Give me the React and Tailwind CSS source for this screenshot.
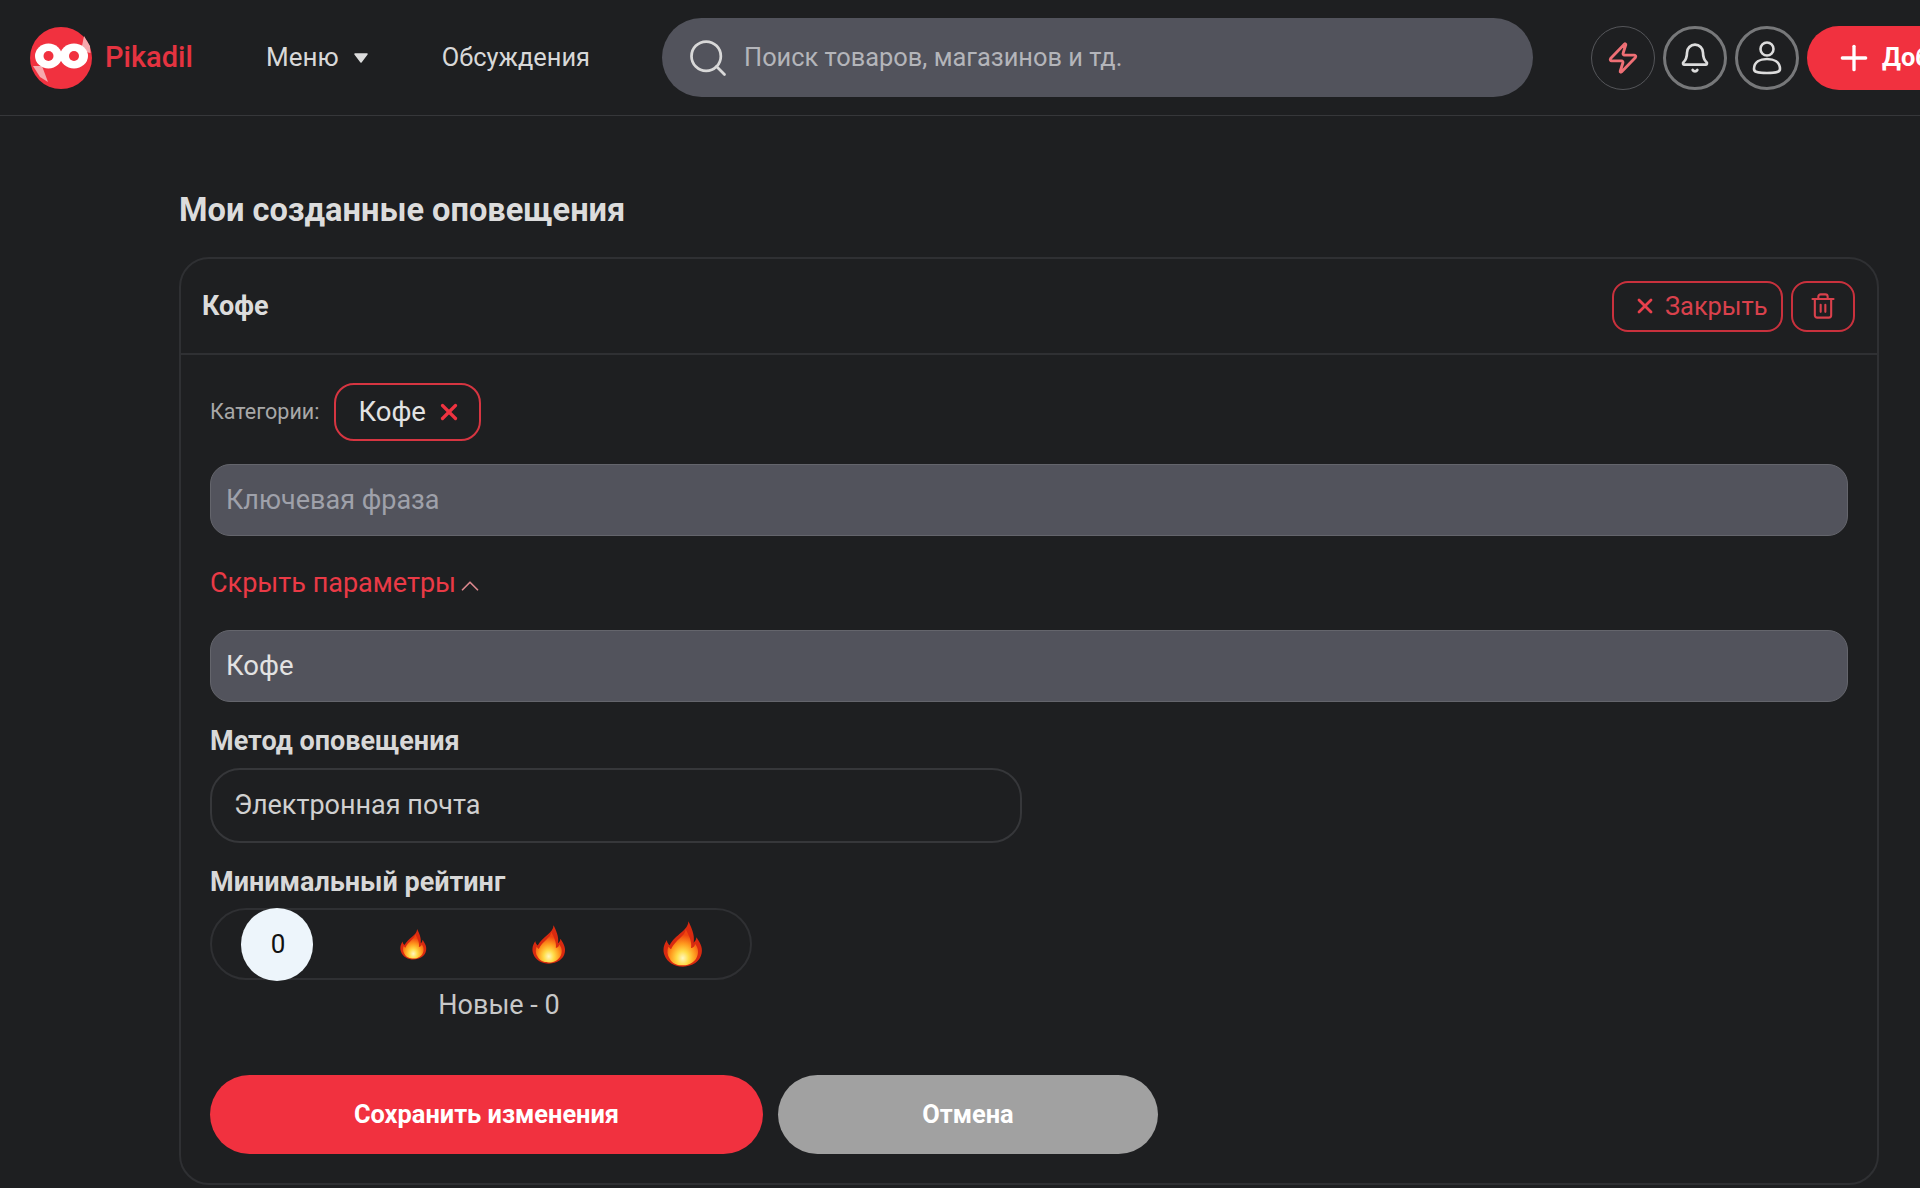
import React from "react";
import { Zap, Bell, Plus, X, Trash2, ChevronUp, Search } from "lucide-react";

function Logo() {
  return (
    <svg width="62" height="62" viewBox="0 0 62 62" className="shrink-0">
      <circle cx="31" cy="31" r="31" fill="#f1313f" />
      <path d="M3 39 L12 39 L18 55 L10 50 Z" fill="#f6a9ae" />
      <path d="M51 24 L54 9 L60 19 L60.5 26 Z" fill="#f6a9ae" />
      <ellipse cx="18.5" cy="29" rx="13.5" ry="12.5" fill="#fff" />
      <ellipse cx="44" cy="29" rx="14" ry="12.5" fill="#fff" />
      <circle cx="18.5" cy="29" r="5" fill="#f1313f" />
      <circle cx="44" cy="29" r="5" fill="#f1313f" />
    </svg>
  );
}

function Flame({ size }) {
  return (
    <svg width={size} height={size * 1.2} viewBox="0 0 30 36" className="shrink-0">
      <defs>
        <radialGradient id="fl" cx="50%" cy="80%" r="65%">
          <stop offset="0%" stopColor="#fff6c0" />
          <stop offset="30%" stopColor="#ffdc48" />
          <stop offset="62%" stopColor="#ff9a1e" />
          <stop offset="100%" stopColor="#f0440f" />
        </radialGradient>
      </defs>
      <path d="M19 1 C19 8 9 11 5 19 C3 17 3 16 3 15 C0 19 0 23 1 26 C3 32 9 35 15 35 C22 35 28 31 29 25 C30 20 27 16 25 13 C25 15 24 16 23 17 C24 11 21 5 19 1 Z" fill="#d92a10" />
      <path d="M17 7 C17 12 9 15 6 22 C5 21 4 20 4 20 C3 23 3 26 5 29 C7 33 11 34 15 34 C20 34 25 31 26 26 C27 22 25 19 24 18 C24 20 22 21 21 21 C22 16 19 11 17 7 Z" fill="url(#fl)" />
    </svg>
  );
}

function CircleBtn({ children, border }) {
  return (
    <button className={`w-16 h-16 rounded-full flex items-center justify-center shrink-0 ${border}`}>
      {children}
    </button>
  );
}

export default function App() {
  return (
    <div className="w-[1920px] h-[1188px] overflow-hidden bg-[#1e1f21] text-[#dcdcdc] font-['Roboto',sans-serif]">
      <header className="h-[116px] border-b border-[#36373a] flex items-center pl-[30px]">
        <Logo />
        <span className="ml-[13px] w-[114px] shrink-0 text-[29px] font-medium text-[#e53340]">Pikadil</span>
        <span className="ml-[47px] text-[26px] text-[#d8d8d8]">Меню</span>
        <svg width="16" height="10" viewBox="0 0 16 10" className="ml-[14px] shrink-0">
          <path d="M2 1 H14 L8 9 Z" fill="#dcdcdc" stroke="#dcdcdc" strokeWidth="1.5" strokeLinejoin="round" />
        </svg>
        <span className="ml-[73px] text-[25.4px] text-[#d8d8d8]">Обсуждения</span>
        <div className="ml-[72px] w-[871px] h-[79px] rounded-full bg-[#52535c] flex items-center pl-[24px] shrink-0">
          <Search size={44} strokeWidth={1.5} className="text-[#d8d8d8] shrink-0" />
          <span className="ml-[14px] text-[25.4px] text-[#b4b5ba]">Поиск товаров, магазинов и тд.</span>
        </div>
        <div className="ml-[58px] flex items-center gap-2 shrink-0">
          <CircleBtn border="border border-[#55565a]">
            <Zap size={34} strokeWidth={2} className="text-[#ef6f75]" />
          </CircleBtn>
          <CircleBtn border="border-[3px] border-[#77787a]">
            <Bell size={32} strokeWidth={2} className="text-[#dcdcdc]" />
          </CircleBtn>
          <CircleBtn border="border-[3px] border-[#77787a]">
            <svg width="32" height="36" viewBox="0 0 32 36" fill="none" stroke="#dcdcdc" strokeWidth="2.6">
              <circle cx="16" cy="9" r="6.5" />
              <path d="M3 29 C3 22 9 19 16 19 C23 19 29 22 29 29 C29 32 26 33 16 33 C6 33 3 32 3 29 Z" />
            </svg>
          </CircleBtn>
          <button className="w-[220px] h-16 rounded-l-full bg-[#f1313f] flex items-center pl-[27px] gap-[8px] shrink-0">
            <Plus size={40} strokeWidth={2} className="text-white shrink-0" />
            <span className="text-[25.4px] font-bold text-white whitespace-nowrap">Добавить</span>
          </button>
        </div>
      </header>

      <main className="pl-[179px] pr-[41px]">
        <h1 className="mt-[75px] text-[32.6px] leading-[38px] font-bold text-[#dcdcdc]">Мои созданные оповещения</h1>
        <section className="mt-[28px] h-[928px] rounded-[30px] border-2 border-[#2f3033]">
          <div className="h-[96px] border-b-2 border-[#2f3033] flex items-center justify-between pl-[21px] pr-[22px]">
            <span className="text-[27px] font-bold text-[#dcdcdc]">Кофе</span>
            <div className="flex items-center gap-2">
              <button className="w-[171px] h-[51px] rounded-2xl border-2 border-[#c9313d] flex items-center pl-[19px] gap-[8px] text-[#e9404c]">
                <X size={24} strokeWidth={2.8} />
                <span className="text-[25.4px] text-[#d9414c]">Закрыть</span>
              </button>
              <button className="w-[64px] h-[51px] rounded-2xl border-2 border-[#c9313d] flex items-center justify-center">
                <Trash2 size={28} strokeWidth={1.8} className="text-[#d9414c]" />
              </button>
            </div>
          </div>

          <div className="pl-[29px] pr-[29px]">
            <div className="mt-[28px] flex items-center gap-[15px]">
              <span className="text-[21.5px] text-[#a8a8a8]">Категории:</span>
              <div className="w-[147px] h-[58px] rounded-[20px] border-2 border-[#d63541] flex items-center pl-[22px] gap-[10px]">
                <span className="text-[27.5px] text-[#e2e2e2]">Кофе</span>
                <X size={26} strokeWidth={3} className="text-[#ef3340]" />
              </div>
            </div>

            <div className="mt-[23px] h-[72px] rounded-[20px] bg-[#52535c] border border-[#64656c] flex items-center pl-[15px] text-[27px] text-[#9fa1aa]">
              Ключевая фраза
            </div>

            <div className="mt-[29px] h-[36px] flex items-center gap-[4px] text-[#ea3a46]">
              <span className="text-[27px]">Скрыть параметры</span>
              <ChevronUp size={30} strokeWidth={1.4} className="mt-[6px] -ml-[5px] text-[#d9868c]" />
            </div>

            <div className="mt-[29px] h-[72px] rounded-[20px] bg-[#52535c] border border-[#64656c] flex items-center pl-[15px] text-[27.5px] text-[#e2e2e2]">
              Кофе
            </div>

            <div className="mt-[23px] text-[27px] leading-[32px] font-bold text-[#d8d8d8]">Метод оповещения</div>
            <div className="mt-[11px] w-[812px] h-[75px] rounded-[30px] border-2 border-[#36373a] flex items-center pl-[22px] text-[27px] text-[#d0d0d0]">
              Электронная почта
            </div>

            <div className="mt-[23px] text-[27px] leading-[32px] font-bold text-[#d8d8d8]">Минимальный рейтинг</div>
            <div className="mt-[10px] w-[542px] h-[72px] rounded-full border-2 border-[#2f3033] flex items-center">
              <div className="ml-[29px] w-[72px] h-[73px] -my-1 shrink-0 rounded-full bg-[#edf5fb] flex items-center justify-center pl-[2px] text-[26px] text-[#111]">0</div>
              <div className="ml-[80px] w-[40px] shrink-0 flex justify-center"><Flame size={27} /></div>
              <div className="ml-[96px] w-[40px] shrink-0 flex justify-center"><Flame size={34} /></div>
              <div className="ml-[94px] w-[40px] shrink-0 flex justify-center"><Flame size={40} /></div>
            </div>
            <div className="mt-[9px] w-[578px] text-center text-[27px] leading-[32px] text-[#c8c8c8]">Новые - 0</div>

            <div className="mt-[54px] flex gap-[15px]">
              <button className="w-[553px] h-[79px] rounded-full bg-[#f1313f] text-[25.4px] font-bold text-white">Сохранить изменения</button>
              <button className="w-[380px] h-[79px] rounded-full bg-[#a1a1a1] text-[25.4px] font-bold text-white">Отмена</button>
            </div>
          </div>
        </section>
      </main>
    </div>
  );
}
